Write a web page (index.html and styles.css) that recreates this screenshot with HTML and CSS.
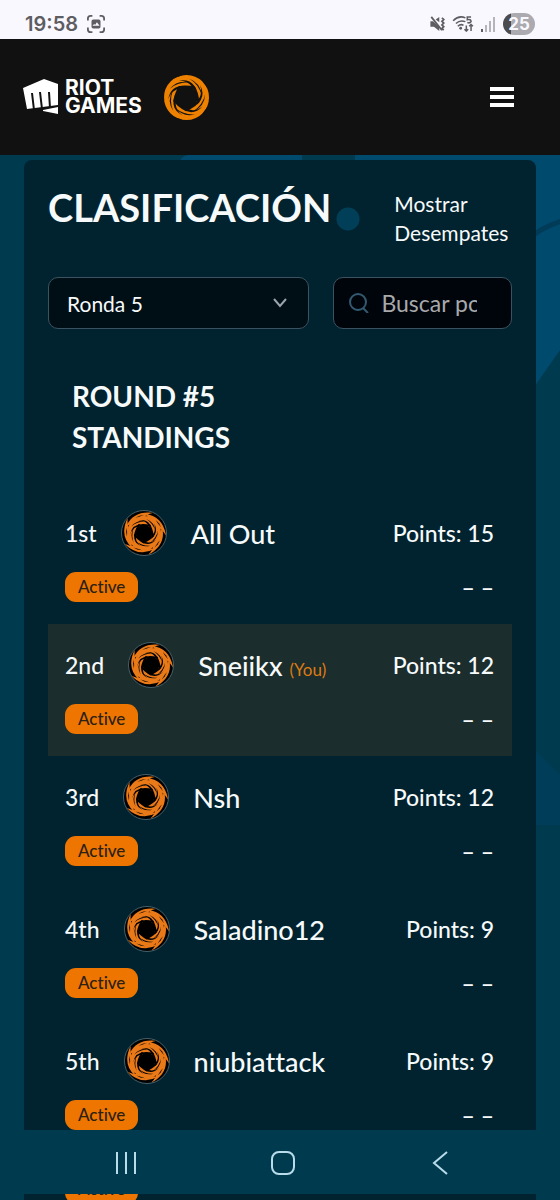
FILE: index.html
```html
<!DOCTYPE html>
<html lang="es">
<head>
<meta charset="utf-8">
<meta name="viewport" content="width=device-width, initial-scale=1">
<title>Clasificación</title>
<link rel="stylesheet" href="styles.css">
</head>
<body>
<svg class="defs" aria-hidden="true">
  <defs>
    <g id="cut">
      <path d="M34 15Q72 8 77 60L72 64Q69 14 34 15Z"/>
      <path d="M56 11Q80 20 82 46Q75 22 56 11Z"/>
      <path d="M26 8L38 2L50 0L34 6Z"/>
    </g>
    <path id="tail" d="M10 34Q26 -2 72 4Q52 8 44 20Z"/>
    <g id="emblem">
      <circle cx="50" cy="50" r="35" fill="none" stroke="currentColor" stroke-width="24"/>
      <use href="#cut"/>
      <use href="#cut" transform="rotate(72 50 50)"/>
      <use href="#cut" transform="rotate(144 50 50)"/>
      <use href="#cut" transform="rotate(216 50 50)"/>
      <use href="#cut" transform="rotate(288 50 50)"/>
    </g>
    <g id="emblem-flared">
      <g fill="currentColor">
        <use href="#tail"/>
        <use href="#tail" transform="rotate(72 50 50)"/>
        <use href="#tail" transform="rotate(144 50 50)"/>
        <use href="#tail" transform="rotate(216 50 50)"/>
        <use href="#tail" transform="rotate(288 50 50)"/>
      </g>
      <use href="#emblem" transform="translate(9 9) scale(.82)"/>
    </g>
  </defs>
</svg>

<div class="status">
  <span class="clock">19:58</span>
  <svg class="shot" viewBox="0 0 20 20" aria-hidden="true"><path d="M1 6V4Q1 1 4 1H6M14 1H16Q19 1 19 4V6M19 14V16Q19 19 16 19H14M6 19H4Q1 19 1 16V14" fill="none" stroke="currentColor" stroke-width="2"/><path fill="currentColor" fill-rule="evenodd" d="M7 5H13Q15 5 15 7V13Q15 15 13 15H7Q5 15 5 13V7Q5 5 7 5ZM6 12H14L11 8L9 11L8 10Z"/></svg>
  <div class="signals">
    <svg class="mute" viewBox="0 0 18 18" aria-hidden="true"><path fill="currentColor" d="M1 6H4L11 12V17L5 12H1ZM7 4L11 1V7Z"/><path d="M2 1L14 16M14 2L16 4L14 6L16 8L14 10L16 12L14 14L16 16" fill="none" stroke="currentColor" stroke-width="2"/></svg>
    <svg class="wifi" viewBox="0 0 24 18" aria-hidden="true"><path d="M1 6Q7 0 14 3M4 9Q8 5 14 7M6 12Q9 9 12 11M20 2H16V5Q20 4 20 7Q19 9 16 8M15 11V17M13 15L15 17L17 15M20 17V10M18 12L20 10L22 12" fill="none" stroke="currentColor" stroke-width="1.6"/><circle cx="9" cy="14" r="1.5" fill="currentColor"/></svg>
    <svg class="bars" viewBox="0 0 14 16" aria-hidden="true"><path fill="currentColor" d="M0 13H2V16H0Z"/><path fill="#b5b4ba" d="M4 9H6V16H4ZM8 5H10V16H8ZM12 1H14V16H12Z"/></svg>
    <span class="battery">25</span>
  </div>
</div>

<header class="topbar">
  <a class="riot" href="#">
    <svg class="fist" viewBox="0 0 36 36" aria-hidden="true"><path fill="#fff" d="M0 9L21 0L35 5V26L4 30ZM20 31L35 28V35L20 32Z"/><path d="M9 14L11 31M17 13L19 30M26 13L27 29" stroke="#111" stroke-width="2"/></svg>
    <span class="riot-name">RIOT<br>GAMES</span>
  </a>
  <a class="tft" href="#" aria-label="Inicio"><svg class="tft-logo" viewBox="3 3 94 94" aria-hidden="true"><use href="#emblem"/></svg></a>
  <button class="menu" type="button" aria-label="Menú"><span></span><span></span><span></span></button>
</header>

<main class="page">
  <svg class="backdrop" viewBox="0 0 380 700" aria-hidden="true">
    <path fill="#004a6e" d="M0 6Q2 1 8 0H122V6ZM175 6V0H380V195L350 238V6Z"/>
    <path fill="none" stroke="#003b57" stroke-width="5" d="M345 88Q358 73 382 66"/>
    <path fill="#003d59" d="M350 590L380 620V670H350Z"/>
  </svg>
  <section class="panel">
    <div class="heading">
      <h1>CLASIFICACIÓN</h1>
      <input class="toggle" type="checkbox" id="ties">
      <label class="ties" for="ties">Mostrar Desempates</label>
    </div>
    <div class="filters">
      <div class="picker">
        <select class="field" aria-label="Ronda"><option>Ronda 5</option></select>
        <svg class="chevron" viewBox="0 0 16 10" aria-hidden="true"><path d="M2 1L8 8L14 1" fill="none" stroke="currentColor" stroke-width="2"/></svg>
      </div>
      <div class="search field">
        <svg class="lens" viewBox="0 0 20 20" aria-hidden="true"><circle cx="9" cy="9" r="8" fill="none" stroke="currentColor" stroke-width="2"/><path d="M14 15L19 20" stroke="currentColor" stroke-width="2"/></svg>
        <input type="text" placeholder="Buscar por nombre" aria-label="Buscar por nombre">
      </div>
    </div>
    <h2>ROUND #5<br>STANDINGS</h2>
    <ol class="list">
      <li class="row">
        <div class="line"><span>1st</span><svg class="avatar" viewBox="0 0 100 100" aria-hidden="true"><use href="#emblem-flared"/></svg><span class="name">All Out</span><span class="points">Points: 15</span></div>
        <div class="line"><span class="badge">Active</span><span class="points">– –</span></div>
      </li>
      <li class="row you">
        <div class="line"><span>2nd</span><svg class="avatar" viewBox="0 0 100 100" aria-hidden="true"><use href="#emblem-flared"/></svg><span class="name">Sneiikx <small>(You)</small></span><span class="points">Points: 12</span></div>
        <div class="line"><span class="badge">Active</span><span class="points">– –</span></div>
      </li>
      <li class="row">
        <div class="line"><span>3rd</span><svg class="avatar" viewBox="0 0 100 100" aria-hidden="true"><use href="#emblem-flared"/></svg><span class="name">Nsh</span><span class="points">Points: 12</span></div>
        <div class="line"><span class="badge">Active</span><span class="points">– –</span></div>
      </li>
      <li class="row">
        <div class="line"><span>4th</span><svg class="avatar" viewBox="0 0 100 100" aria-hidden="true"><use href="#emblem-flared"/></svg><span class="name">Saladino12</span><span class="points">Points: 9</span></div>
        <div class="line"><span class="badge">Active</span><span class="points">– –</span></div>
      </li>
      <li class="row">
        <div class="line"><span>5th</span><svg class="avatar" viewBox="0 0 100 100" aria-hidden="true"><use href="#emblem-flared"/></svg><span class="name">niubiattack</span><span class="points">Points: 9</span></div>
        <div class="line"><span class="badge">Active</span><span class="points">– –</span></div>
      </li>
    </ol>
  </section>
</main>

<nav class="system">
  <button type="button" aria-label="Recientes"><svg viewBox="0 0 24 24"><path d="M3 1V23M12 1V23M21 1V23"/></svg></button>
  <button type="button" aria-label="Inicio"><svg viewBox="0 0 24 24"><rect x="1" y="1" width="22" height="22" rx="7"/></svg></button>
  <button type="button" aria-label="Atrás"><svg viewBox="0 0 24 24"><path d="M19 1L6 12L19 23"/></svg></button>
</nav>
<div class="peek"><span class="badge">Active</span></div>
</body>
</html>
```
FILE: styles.css
```css
* { box-sizing: border-box; }
body {
  margin: 0;
  min-height: 100vh;
  display: flex;
  flex-direction: column;
  background: #003a4f;
  color: #f7fafb;
  font-family: Lato, "Open Sans", sans-serif;
  font-size: 23px;
  font-variant-ligatures: none;
}
button { padding: 0; border: 0; background: none; color: inherit; }
a { color: inherit; text-decoration: none; }
.defs { position: absolute; width: 0; height: 0; }

.status {
  display: flex;
  align-items: center;
  height: 39px;
  padding: 8px 25px 0;
  background: #f9f8fe;
  color: #5d5d62;
}
.clock { font: 600 20px/24px Inter, sans-serif; }
.shot { width: 18px; height: 18px; margin-left: 9px; }
.signals { display: flex; align-items: center; gap: 6px; margin-left: auto; }
.mute { width: 17px; height: 16px; }
.wifi { width: 23px; height: 17px; }
.bars { width: 14px; height: 16px; margin-right: 2px; }
.battery {
  width: 32px;
  border-radius: 11px;
  background: linear-gradient(90deg, #4c4b50 25%, #abaab0 25%);
  color: #f9f8fe;
  font: 700 17px/22px Inter, sans-serif;
  text-align: center;
}

.topbar {
  display: flex;
  align-items: center;
  height: 116px;
  padding: 0 46px 0 23px;
  background: #111;
}
.riot { display: flex; align-items: center; gap: 6px; }
.fist { width: 36px; height: 36px; }
.riot-name { font: 700 21px/18px Inter, sans-serif; color: #fff; }
.tft { margin-left: 22px; line-height: 0; }
.tft-logo { width: 45px; height: 45px; color: #ee8100; fill: #111; }
.menu { display: grid; gap: 4px; width: 24px; margin-left: auto; }
.menu span { height: 4px; background: #fff; }

.page { position: relative; padding: 5px 24px 0; }
.backdrop { position: absolute; top: 0; right: 0; width: 380px; height: 700px; }
.panel {
  position: relative;
  padding: 24px 24px 0;
  border-radius: 8px 8px 0 0;
  background: #00232f;
}
.heading { display: flex; align-items: flex-start; height: 93px; }
h1 { margin: 0; font-size: 38px; font-weight: 700; line-height: 46px; }
.toggle {
  appearance: none;
  flex: none;
  width: 48px;
  height: 24px;
  margin: 23px 10px 0 5px;
  border-radius: 12px;
  background: radial-gradient(circle at 12px 12px, #003f57 11px, transparent 12px);
}
.ties { flex: 1; font-size: 21px; line-height: 29px; padding-top: 5px; }
.filters { display: grid; grid-template-columns: 262fr 179fr; gap: 24px; }
.picker { position: relative; }
.field {
  width: 100%;
  height: 52px;
  border: 1px solid #3b5360;
  border-radius: 10px;
  background: #000e16;
  color: #f7fafb;
  font: 21px Lato, sans-serif;
}
.picker .field { appearance: none; padding: 0 18px; }
.chevron { position: absolute; right: 21px; top: 21px; width: 16px; height: 10px; color: #9aa5ab; }
.search { display: flex; align-items: center; gap: 12px; padding: 0 34px 0 15px; background: #00050c; }
.lens { flex: none; width: 20px; height: 20px; color: #335a70; }
.search input {
  width: 100%;
  min-width: 0;
  padding: 0;
  border: 0;
  background: none;
  color: inherit;
  font: 23px Lato, sans-serif;
}
.search input::placeholder { color: #a9a9ab; opacity: 1; }
h2 { margin: 47px 24px 34px; font-size: 28px; font-weight: 700; line-height: 41px; }

.list { margin: 0; padding: 0; list-style: none; }
.row { display: grid; gap: 16px; padding: 18px 18px 22px 17px; font-weight: 500; }
.row:last-child { padding-bottom: 0; }
.row.you { background: #1b2d2c; }
.line { display: flex; align-items: center; height: 46px; }
.line + .line { height: 30px; }
.avatar {
  width: 46px;
  height: 46px;
  margin: 0 24px;
  border: 1px solid #46616c;
  border-radius: 50%;
  background: #000;
  color: #ea7a18;
  fill: #000;
}
.name { font-size: 27px; }
.name small { font-size: 17px; font-weight: 400; color: #df7a12; }
.points { margin-left: auto; }
.badge {
  padding: 0 13px;
  border-radius: 11px;
  background: #ee7600;
  color: #2a2013;
  font-size: 17px;
  font-weight: 500;
  line-height: 30px;
}

.system { display: flex; justify-content: space-between; align-items: center; height: 64px; padding: 2px 108px 0 114px; }
.system button { width: 24px; height: 24px; }
.system svg { display: block; width: 24px; height: 24px; fill: none; stroke: #b9dceb; stroke-width: 2; }
.peek {
  display: flex;
  align-items: flex-end;
  flex: none;
  height: 6px;
  margin: 0 24px;
  padding-left: 41px;
  overflow: hidden;
  background: #00232f;
}
.peek .badge { margin-bottom: -4px; }
```
